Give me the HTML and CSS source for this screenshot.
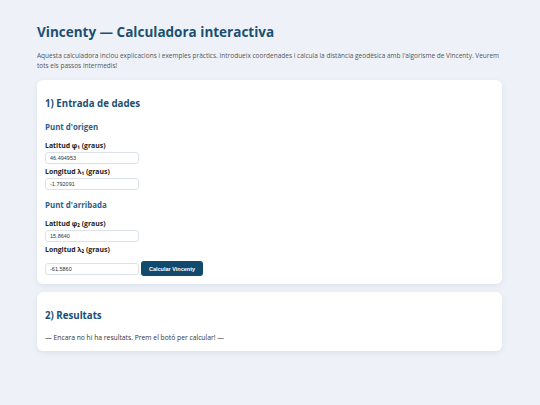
FILE: index.html
```html
<!DOCTYPE html>
<html lang="ca">
<head>
<meta charset="utf-8">
<title>Vincenty — Calculadora interactiva</title>
<link rel="stylesheet" href="styles.css">
</head>
<body>
<main class="page">
  <h1 class="title">Vincenty — Calculadora interactiva</h1>
  <p class="intro">Aquesta calculadora inclou explicacions i exemples pràctics. Introdueix coordenades i calcula la distància geodèsica amb l'algorisme de Vincenty. Veurem tots els passos intermedis!</p>

  <section class="card">
    <h2 class="card-title">1) Entrada de dades</h2>
    <h3 class="group-title">Punt d'origen</h3>
    <label class="field-label">Latitud φ₁ (graus)</label>
    <input class="field" type="text" value="46.494953">
    <label class="field-label">Longitud λ₁ (graus)</label>
    <input class="field" type="text" value="-1.792091">

    <h3 class="group-title">Punt d'arribada</h3>
    <label class="field-label">Latitud φ₂ (graus)</label>
    <input class="field" type="text" value="15.8640">
    <label class="field-label">Longitud λ₂ (graus)</label>
    <div class="row">
      <input class="field" type="text" value="-61.5860">
      <button class="btn" type="button">Calcular Vincenty</button>
    </div>
  </section>

  <section class="card">
    <h2 class="card-title">2) Resultats</h2>
    <p class="empty">— Encara no hi ha resultats. Prem el botó per calcular! —</p>
  </section>
</main>
</body>
</html>
```
FILE: styles.css
```css
* { box-sizing: border-box; }
html, body { margin: 0; padding: 0; }
body {
  background: #eef2f8;
  font-family: "Open Sans", "Noto Sans", sans-serif;
  color: #222;
}
.page {
  width: 465px;
  margin: 0 0 0 37px;
  padding-top: 22px;
}
.title {
  margin: 0;
  font-size: 13.5px;
  line-height: 20px;
  font-weight: 700;
  color: #1b4f72;
}
.intro {
  margin: 9px 0 9px;
  font-size: 6.5px;
  line-height: 10px;
  color: #555;
}
.card {
  background: #fff;
  border-radius: 6px;
  box-shadow: 0 2px 6px rgba(30, 50, 90, 0.08);
  padding: 16px 8px 8px;
  margin-bottom: 7px;
}
.card + .card { margin-top: 8px; }
.card-title {
  margin: 0 0 9px;
  font-size: 9.7px;
  line-height: 16px;
  font-weight: 700;
  color: #1b4f72;
}
.group-title {
  margin: 0 0 8px;
  font-size: 7.9px;
  line-height: 12px;
  font-weight: 700;
  color: #2a628c;
}
.field-label {
  display: block;
  font-size: 6.9px;
  line-height: 10px;
  font-weight: 700;
  color: #222;
  margin-bottom: 1px;
}
.field {
  display: block;
  width: 94px;
  height: 12px;
  border: 1px solid #dde2ea;
  border-radius: 3px;
  padding: 0 4px;
  font-family: "Liberation Sans", Arial, sans-serif;
  font-size: 5.5px;
  color: #333;
  background: #fff;
  margin-bottom: 3px;
}
.field + .group-title { margin-top: 9px; }
.row {
  display: flex;
  align-items: center;
  gap: 2px;
  margin-top: 6px;
}
.row .field { margin-bottom: 0; }
.btn {
  height: 15px;
  padding: 0 8px;
  border: 0;
  border-radius: 3px;
  background: #124a6e;
  color: #fff;
  font-family: "Liberation Sans", Arial, sans-serif;
  font-size: 5.5px;
  font-weight: 700;
}
.empty {
  margin: 0;
  font-size: 6.75px;
  line-height: 10px;
  color: #333;
}
```
